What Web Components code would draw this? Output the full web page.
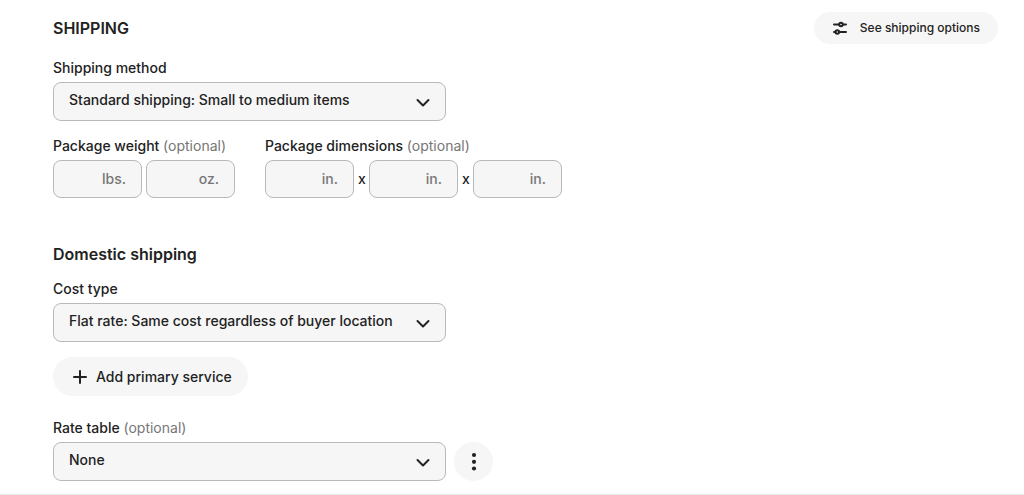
<!DOCTYPE html>
<html lang="en">
<head>
<meta charset="utf-8">
<meta name="viewport" content="width=device-width, initial-scale=1">
<title>Shipping</title>
<style>
    body {
        margin: 0;
        background: #FFF;
        color: #222;
        font: 500 14px/20px Inter, "Liberation Sans", sans-serif;
        --field: #F6F6F6;
        --edge: #B9B9B9;
        --muted: #767676;
    }
</style>
</head>
<body>
<shipping-form></shipping-form>

<script>
// jshint asi: true, esversion: 6, laxcomma: true
'use strict'

const icons = {
    sliders: '<path d="M2 4.5h5M11 4.5h3M2 12h1.5M7 12h7"/><circle cx="9" cy="4.5" r="1.8"/><circle cx="5.3" cy="12" r="1.8"/>'
    ,plus: '<path d="M8 2v12M2 8h12"/>'
    ,chevron: '<path d="M2.5 6l5.5 5.5 5.5-5.5"/>'
    ,dots: '<g fill="currentColor" stroke="none"><circle cx="8" cy="1" r="2.1"/><circle cx="8" cy="7.8" r="2.1"/><circle cx="8" cy="14.5" r="2.1"/></g>'
}

const attach = (el, html) => {
    const template = document.createElement('template')
    template.innerHTML = html
    el.attachShadow({mode: 'open'}).appendChild(template.content.cloneNode(true))
}

class FormIcon extends HTMLElement {
    constructor() {
        super()
        attach(this, /* html */`
<style>
    :host {
        display: inline-flex;
        flex: none;
    }
    svg {
        width: 16px;
        height: 16px;
        overflow: visible;
        fill: none;
        stroke: currentColor;
        stroke-width: 2;
        stroke-linecap: round;
        stroke-linejoin: round;
    }
</style>
<svg viewBox="0 0 16 16" aria-hidden="true"></svg>`)
    }
    connectedCallback() {
        this.shadowRoot.querySelector('svg').innerHTML = icons[this.getAttribute('name')]
    }
}
customElements.define('form-icon', FormIcon)

class PillButton extends HTMLElement {
    constructor() {
        super()
        attach(this, /* html */`
<style>
    :host {
        display: block;
        flex: none;
    }
    button {
        display: flex;
        align-items: center;
        gap: 8px;
        height: 39px;
        padding: 0 16px 0 19px;
        border: 0;
        border-radius: 20px;
        background: var(--field);
        color: inherit;
        font: inherit;
        cursor: pointer;
    }
    :host([size=small]) button {
        gap: 12px;
        height: 32px;
        padding: 0 18px;
        font-size: 12px;
    }
    :host([round]) button {
        justify-content: center;
        width: 39px;
        padding: 0;
    }
</style>
<button type="button"><slot></slot></button>`)
    }
    connectedCallback() {
        const label = this.getAttribute('label')
        if (label) { this.shadowRoot.querySelector('button').setAttribute('aria-label', label) }
    }
}
customElements.define('pill-button', PillButton)

class SelectField extends HTMLElement {
    constructor() {
        super()
        attach(this, /* html */`
<style>
    :host {
        display: block;
    }
    label {
        display: block;
        margin-bottom: 4px;
    }
    .optional {
        color: var(--muted);
        font-weight: 400;
    }
    .row {
        display: flex;
        align-items: center;
        gap: 8px;
    }
    .box {
        display: grid;
        align-items: center;
        width: 100%;
        max-width: 393px;
    }
    select, form-icon {
        grid-area: 1 / 1;
    }
    select {
        appearance: none;
        width: 100%;
        height: 39px;
        margin: 0;
        padding: 0 40px 3px 15px;
        border: 1px solid var(--edge);
        border-radius: 8px;
        background: var(--field);
        color: inherit;
        font: inherit;
    }
    form-icon {
        justify-self: end;
        margin-right: 15px;
        pointer-events: none;
    }
</style>
<label for="select"><span class="text"></span> <span class="optional"></span></label>
<div class="row">
    <div class="box">
        <select id="select"><option></option></select>
        <form-icon name="chevron"></form-icon>
    </div>
    <slot></slot>
</div>`)
    }
    connectedCallback() {
        const root = this.shadowRoot
        root.querySelector('.text').textContent = this.getAttribute('label')
        root.querySelector('option').textContent = this.getAttribute('value')
        if (this.hasAttribute('optional')) {
            root.querySelector('.optional').textContent = '(optional)'
        }
    }
}
customElements.define('select-field', SelectField)

class UnitInput extends HTMLElement {
    constructor() {
        super()
        attach(this, /* html */`
<style>
    :host {
        display: block;
    }
    label {
        box-sizing: border-box;
        display: flex;
        align-items: center;
        width: 89px;
        height: 38px;
        padding: 0 15px;
        border: 1px solid var(--edge);
        border-radius: 8px;
        background: var(--field);
        color: var(--muted);
    }
    input {
        flex: 1;
        width: 0;
        min-width: 0;
        padding: 0;
        border: 0;
        outline: 0;
        background: none;
        color: #222;
        font: inherit;
    }
</style>
<label><input type="text" inputmode="decimal"><slot></slot></label>`)
    }
    connectedCallback() {
        this.shadowRoot.querySelector('input').setAttribute('aria-label', this.getAttribute('label'))
    }
}
customElements.define('unit-input', UnitInput)

class FieldGroup extends HTMLElement {
    constructor() {
        super()
        attach(this, /* html */`
<style>
    :host {
        display: block;
    }
    fieldset {
        margin: 0;
        padding: 0;
        border: 0;
        min-width: 0;
    }
    legend {
        margin-bottom: 4px;
        padding: 0;
    }
    legend span {
        color: var(--muted);
        font-weight: 400;
    }
    .row {
        display: flex;
        align-items: center;
        gap: 4px;
    }
</style>
<fieldset>
    <legend><slot name="legend"></slot> <span>(optional)</span></legend>
    <div class="row"><slot></slot></div>
</fieldset>`)
    }
}
customElements.define('field-group', FieldGroup)

class ShippingForm extends HTMLElement {
    constructor() {
        super()
        attach(this, /* html */`
<style>
    :host {
        display: block;
        padding: 12px 26px 13px 53px;
        border-bottom: 1px solid #E8E8E8;
    }
    header {
        display: flex;
        align-items: center;
        justify-content: space-between;
        margin-bottom: 14px;
    }
    h2, h3 {
        margin: 0;
        font-size: 16px;
        font-weight: 600;
        line-height: 24px;
    }
    h3 {
        margin: 44px 0 13px;
    }
    .package {
        display: flex;
        flex-wrap: wrap;
        gap: 15px 30px;
        margin-top: 15px;
    }
    .by {
        width: 7px;
        text-align: center;
    }
    .add {
        display: flex;
        margin: 15px 0 22px;
    }
</style>
<header>
    <h2>SHIPPING</h2>
    <pill-button size="small"><form-icon name="sliders"></form-icon>See shipping options</pill-button>
</header>
<select-field label="Shipping method" value="Standard shipping: Small to medium items"></select-field>
<div class="package">
    <field-group>
        <span slot="legend">Package weight</span>
        <unit-input label="Pounds">lbs.</unit-input>
        <unit-input label="Ounces">oz.</unit-input>
    </field-group>
    <field-group>
        <span slot="legend">Package dimensions</span>
        <unit-input label="Length">in.</unit-input>
        <span class="by">x</span>
        <unit-input label="Width">in.</unit-input>
        <span class="by">x</span>
        <unit-input label="Height">in.</unit-input>
    </field-group>
</div>
<h3>Domestic shipping</h3>
<select-field label="Cost type" value="Flat rate: Same cost regardless of buyer location"></select-field>
<div class="add">
    <pill-button><form-icon name="plus"></form-icon>Add primary service</pill-button>
</div>
<select-field label="Rate table" value="None" optional>
    <pill-button round label="More options"><form-icon name="dots"></form-icon></pill-button>
</select-field>`)
    }
}
customElements.define('shipping-form', ShippingForm)
</script>
</body>
</html>
